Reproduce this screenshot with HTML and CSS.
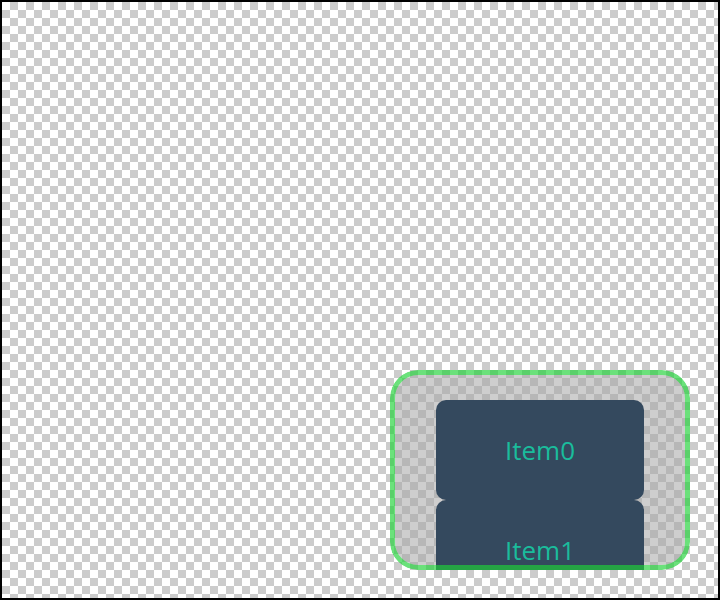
FILE: index.html
```html
<!DOCTYPE html>
<html>
<head>
<meta charset="utf-8">
<link rel="stylesheet" href="styles.css">
</head>
<body>
<div class="frame">
  <div class="list">
    <div class="item">Item0</div>
    <div class="item">Item1</div>
  </div>
</div>
</body>
</html>
```

FILE: styles.css
```css
html, body {
  margin: 0;
  padding: 0;
}

body {
  width: 720px;
  height: 600px;
  overflow: hidden;
}

.frame {
  box-sizing: border-box;
  width: 720px;
  height: 600px;
  border: 2px solid #000;
  background: repeating-conic-gradient(#cccccc 0 25%, #ffffff 0 50%) 0 0 / 16px 16px;
  display: flex;
  justify-content: flex-end;
  align-items: flex-end;
  padding: 0 28px 28px 0;
}

.list {
  position: relative;
  isolation: isolate;
  box-sizing: border-box;
  width: 300px;
  height: 200px;
  border-radius: 28px;
  overflow: hidden;
  padding: 30px 46px 0;
  display: flex;
  flex-direction: column;
  flex-shrink: 0;
}

/* translucent grey fill inside the green frame */
.list::before {
  content: "";
  position: absolute;
  inset: 5px;
  border-radius: 23px;
  background: rgba(165, 165, 165, 0.55);
  z-index: -1;
}

/* green frame drawn over the items */
.list::after {
  content: "";
  position: absolute;
  inset: 0;
  border: 5px solid rgba(30, 210, 55, 0.66);
  border-radius: 28px;
  pointer-events: none;
  z-index: 1;
}

.item {
  flex: 0 0 100px;
  height: 100px;
  border-radius: 10px;
  background: #34495e;
  color: #1abc9c;
  font-family: "Open Sans", "Noto Sans", sans-serif;
  font-size: 26px;
  display: flex;
  align-items: center;
  justify-content: center;
}
```
